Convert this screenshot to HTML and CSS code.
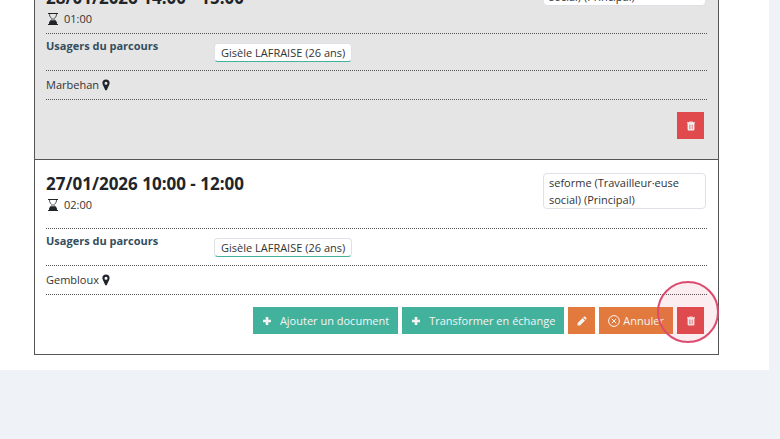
FILE: index.html
```
<!DOCTYPE html>
<html lang="fr">
<head>
    <meta charset="utf-8">
    <title>Rendez-vous</title>
    <link rel="stylesheet" href="styles.css">
</head>
<body>
    <svg class="sprite" aria-hidden="true">
        <symbol id="hourglass" viewBox="0 0 12 12">
            <path d="M1 .5h10M1 11.500h10" stroke="currentColor" fill="none"/>
            <path d="M2.500 1c0 3 1.500 4 3 5-1.500 1-3 2-3 5M9.500 1c0 3-1.500 4-3 5 1.500 1 3 2 3 5" stroke="currentColor" stroke-width=".8" fill="none"/>
            <path d="M2 11.500c0-2.500 1-3.500 2.500-4.200h3c1.500.7 2.500 1.700 2.500 4.200z" fill="currentColor"/>
        </symbol>
        <symbol id="marker" viewBox="0 0 8 12">
            <path fill="currentColor" fill-rule="evenodd" d="M4 .5a3.600 3.600 0 0 1 3.600 3.600c0 .8-.2 1.300-.5 1.900L4.800 11a.9.9 0 0 1-1.600 0L.9 6C.6 5.400.4 4.900.4 4.100A3.600 3.600 0 0 1 4 .5zm0 2.200a1.500 1.500 0 1 0 0 3 1.500 1.500 0 0 0 0-3z"/>
        </symbol>
        <symbol id="trash" viewBox="0 0 10 10">
            <path fill="currentColor" fill-rule="evenodd" d="M3 1.300L3.600.4h2.800L7 1.300h2v1H8.400v6q0 1.300-1 1.300H2.600q-1 0-1-1.300v-6H1v-1zM4 1.300h2l-.3-.4H4.300zM3 3.500v4.800h.5V3.500zm1.700 0v4.800h.5V3.500zm1.700 0v4.800h.5V3.500z"/>
        </symbol>
        <symbol id="plus" viewBox="0 0 10 10">
            <path fill="currentColor" d="M3.700 1h2.600v2.700H9v2.600H6.300V9H3.700V6.300H1V3.700h2.700z"/>
        </symbol>
        <symbol id="pencil" viewBox="0 0 10 10">
            <path fill="currentColor" d="M.6 9.400V7l5-5L8 4.400l-5 5zM6.200 1.400l.8-.8q.5-.4 1 0L9.400 2q.4.5 0 1l-.8.800z"/>
        </symbol>
        <symbol id="cancel" viewBox="0 0 12 12">
            <circle cx="6" cy="6" r="5.400" fill="none" stroke="currentColor"/>
            <path d="M3.800 3.800l4.400 4.400M8.200 3.800L3.800 8.200" fill="none" stroke="currentColor"/>
        </symbol>
    </svg>

    <main class="panel">
        <article class="card canceled">
            <div class="head">
                <div class="when">
                    <h2>28/01/2026 14:00 - 15:00</h2>
                    <p class="duration"><svg class="icon"><use href="#hourglass"/></svg>01:00</p>
                </div>
                <span class="badge">seforme (Travailleur·euse social) (Principal)</span>
            </div>
            <div class="users">
                <h3>Usagers du parcours</h3>
                <span class="chip">Gisèle LAFRAISE (26 ans)</span>
            </div>
            <p class="place">Marbehan <svg class="marker"><use href="#marker"/></svg></p>
            <div class="actions">
                <button class="btn red" aria-label="Supprimer"><svg class="glyph"><use href="#trash"/></svg></button>
            </div>
        </article>

        <article class="card">
            <div class="head">
                <div class="when">
                    <h2>27/01/2026 10:00 - 12:00</h2>
                    <p class="duration"><svg class="icon"><use href="#hourglass"/></svg>02:00</p>
                </div>
                <span class="badge">seforme (Travailleur·euse social) (Principal)</span>
            </div>
            <div class="users">
                <h3>Usagers du parcours</h3>
                <span class="chip">Gisèle LAFRAISE (26 ans)</span>
            </div>
            <p class="place">Gembloux <svg class="marker"><use href="#marker"/></svg></p>
            <div class="actions">
                <button class="btn green"><svg class="glyph"><use href="#plus"/></svg>Ajouter un document</button>
                <button class="btn green"><svg class="glyph"><use href="#plus"/></svg>Transformer en échange</button>
                <button class="btn orange" aria-label="Modifier"><svg class="glyph"><use href="#pencil"/></svg></button>
                <button class="btn orange tight"><svg class="icon"><use href="#cancel"/></svg>Annuler</button>
                <div class="target">
                    <button class="btn red" aria-label="Supprimer"><svg class="glyph"><use href="#trash"/></svg></button>
                    <span class="halo"></span>
                </div>
            </div>
        </article>
    </main>
</body>
</html>
```
FILE: styles.css
```
* {
    box-sizing: border-box;
}
body {
    margin: 0;
    background-color: #eff3f8;
    color: #333;
    font-family: "Open Sans", "Noto Sans", sans-serif;
    font-size: 11px;
    line-height: 18px;
}
h2, h3, p {
    margin: 0;
}
.sprite {
    position: absolute;
    width: 0;
    height: 0;
}
.icon {
    width: 12px;
    height: 12px;
}
.glyph {
    width: 10px;
    height: 10px;
}

/* the list is scrolled a little way down */
.panel {
    margin: -44px 11px 0 0;
    padding: 0 50px 15px 34px;
    background-color: #fff;
}
.card {
    padding: 13px 11px 0;
    border: 1px solid #555;
    background-color: #fff;
}
.card + .card {
    border-top: none;
}
.card.canceled {
    background-color: #e5e5e5;
}

.head {
    display: flex;
    justify-content: space-between;
    align-items: flex-start;
    border-bottom: 1px dotted #555;
}
.when {
    padding-bottom: 5px;
}
.canceled .when {
    padding-top: 17px;
}
h2 {
    margin-bottom: 1px;
    color: #212529;
    font-size: 17px;
    line-height: 22px;
}
.duration {
    display: flex;
    align-items: center;
    gap: 5px;
    padding-left: 1px;
}
.duration .icon {
    color: #212529;
}
.badge {
    width: 163px;
    margin: 0 1px 19px 0;
    padding: 0 5px;
    border: 1px solid #dee2e6;
    border-radius: 4px;
    background-color: #fff;
    line-height: 17px;
}

.users {
    display: flex;
    align-items: flex-start;
    border-bottom: 1px dotted #555;
}
h3 {
    width: 168px;
    padding-top: 3px;
    color: #334d5c;
    font-size: 11px;
}
.chip {
    margin: 9px 0 8px;
    padding: 0 6px;
    border: 1px solid #dee2e6;
    border-bottom-color: #43b29d;
    border-radius: 4px;
    background-color: #fff;
    line-height: 17px;
}
.place {
    border-bottom: 1px dotted #555;
    line-height: 28px;
}
.marker {
    width: 8px;
    height: 12px;
    color: #212529;
    vertical-align: -2px;
}

.actions {
    display: flex;
    justify-content: flex-end;
    gap: 4px;
    padding: 12px 3px 20px 0;
}
.btn {
    display: flex;
    justify-content: center;
    align-items: center;
    gap: 8px;
    min-width: 27px;
    height: 27px;
    padding: 0 9px;
    border: none;
    color: #f4f4f4;
    font: inherit;
    cursor: pointer;
}
.btn.tight {
    gap: 3px;
}
/* icon-only buttons stay square */
.btn[aria-label] {
    padding: 0 8px;
}
.green {
    background-color: #43b29d;
}
.orange {
    background-color: #e2793d;
}
.red {
    background-color: #e04a4c;
}
.target {
    position: relative;
}
.halo {
    position: absolute;
    top: -26px;
    left: -20px;
    width: 62px;
    height: 62px;
    border: 2px solid #dc4a6c;
    border-radius: 50%;
    background-color: rgba(220, 74, 108, 0.1);
    pointer-events: none;
}
```
